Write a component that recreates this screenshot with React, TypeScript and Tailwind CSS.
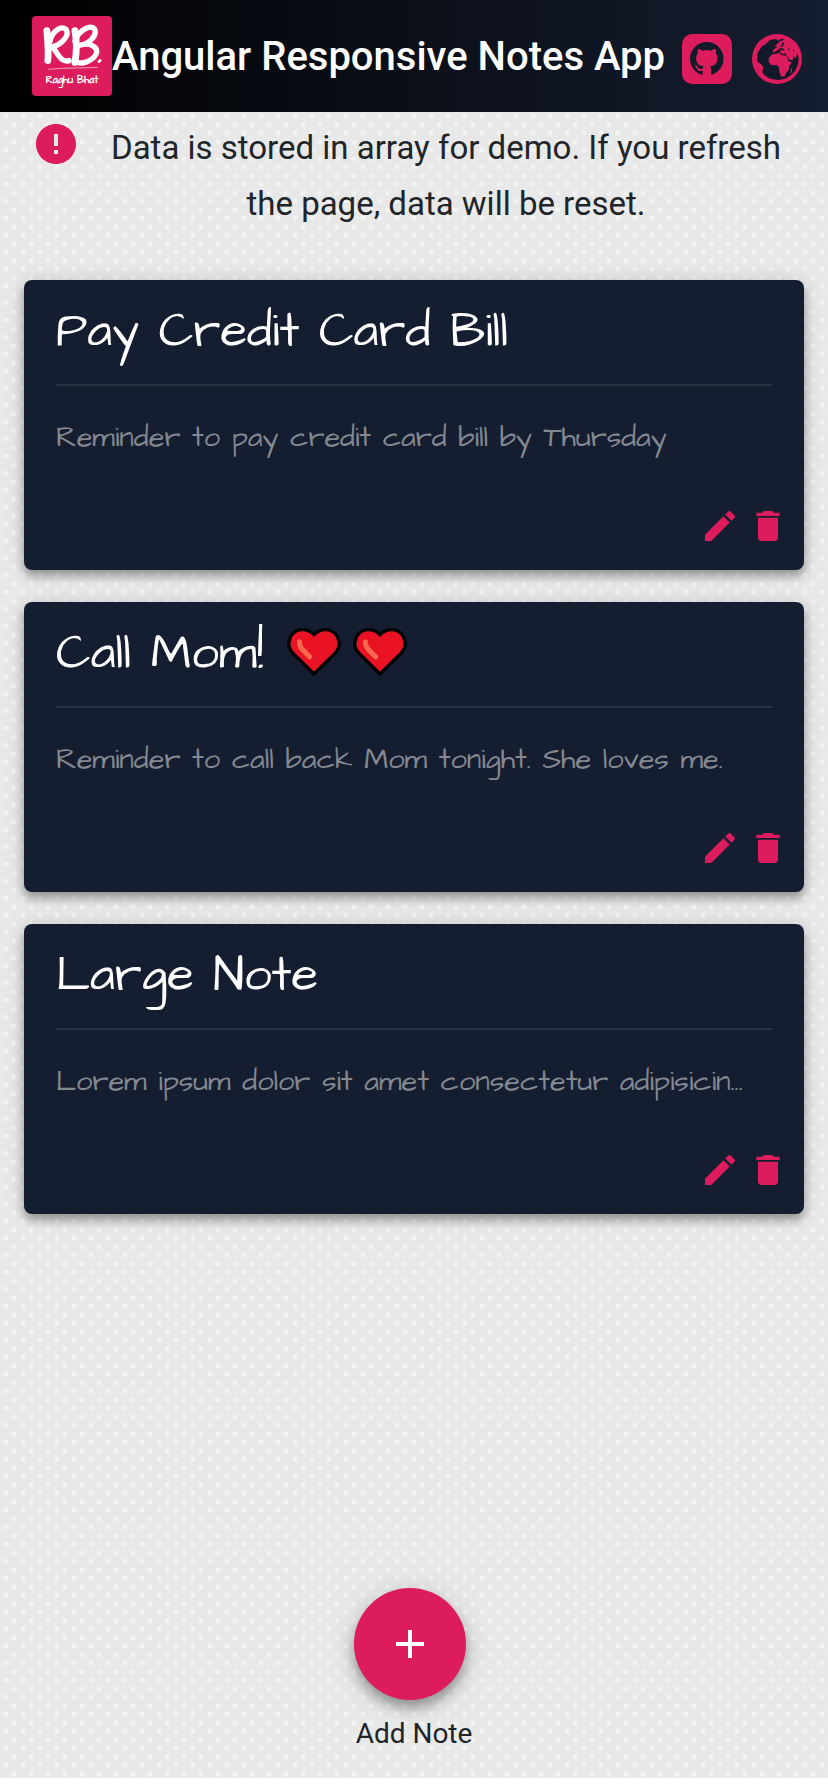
import { MdDelete, MdEdit, MdError, MdAdd } from 'react-icons/md';

type Note = { title: string; hearts?: number; body: string };

const notes: Note[] = [
  { title: 'Pay Credit Card Bill', body: 'Reminder to pay credit card bill by Thursday' },
  { title: 'Call Mom!', hearts: 2, body: 'Reminder to call back Mom tonight. She loves me.' },
  { title: 'Large Note', body: 'Lorem ipsum dolor sit amet consectetur adipisicin...' },
];

function Logo() {
  return (
    <a
      href="#"
      aria-label="Raghu Bhat"
      className="flex size-20 shrink-0 flex-col items-center rounded-sm bg-[#dc1c5c] pt-2 text-white"
    >
      <svg viewBox="0 0 62 48" className="h-12 w-15" fill="none" stroke="currentColor" strokeLinecap="round" strokeLinejoin="round" aria-hidden="true">
        <path strokeWidth="7" d="M5 6C6 18 7 28 6 37" />
        <path strokeWidth="5.500" d="M8 18C10 6 21 0 25 5C29 12 19 21 10 23C15 25 18 40 28 37" />
        <path strokeWidth="7" d="M34 6C36 17 36 28 34 39" />
        <path strokeWidth="5.500" d="M34 17C38 5 50 0 54 4C58 11 48 20 40 21C49 18 59 23 56 30C53 37 41 42 34 38" />
        <path strokeWidth="3" d="M59 38L60 37" />
        <path strokeWidth="1" opacity=".6" d="M7 46C25 44 42 45 57 44" />
      </svg>
      <span className="font-['Architects_Daughter','Lato',cursive] text-[10px] leading-4 font-bold">Raghu Bhat</span>
    </a>
  );
}

function GithubIcon() {
  return (
    <svg viewBox="0 0 50 50" className="size-[50px]" aria-hidden="true">
      <rect width="50" height="50" rx="10" fill="#dc1c5c" />
      <path
        transform="translate(8 8) scale(2.1)"
        fill="#121a2a"
        d="M8 0C3.58 0 0 3.58 0 8c0 3.54 2.29 6.53 5.47 7.59.4.07.55-.17.55-.38 0-.19-.01-.82-.01-1.49-2.01.37-2.53-.49-2.69-.94-.09-.23-.48-.94-.82-1.13-.28-.15-.68-.52-.01-.53.63-.01 1.08.58 1.23.82.72 1.21 1.87.87 2.33.66.07-.52.28-.87.51-1.07-1.78-.2-3.64-.89-3.64-3.95 0-.87.31-1.59.82-2.15-.08-.2-.36-1.02.08-2.12 0 0 .67-.21 2.2.82.64-.18 1.32-.27 2-.27s1.36.09 2 .27c1.53-1.04 2.2-.82 2.2-.82.44 1.1.16 1.92.08 2.12.51.56.82 1.27.82 2.15 0 3.07-1.87 3.75-3.65 3.95.29.25.54.73.54 1.48 0 1.07-.01 1.93-.01 2.2 0 .21.15.46.55.38A8.01 8.01 0 0 0 16 8c0-4.42-3.58-8-8-8z"
      />
    </svg>
  );
}

function GlobeIcon() {
  return (
    <svg viewBox="0 0 150 150" className="size-[50px]" aria-hidden="true">
      <circle cx="75" cy="75" r="75" fill="#dc1c5c" />
      <path
        fill="#121a2a"
        d="M72 15L58 17L47 22L50 26L40 27L42 31L31 35L24 46L17 56L15 70L17 84L27 90L34 100L31 112L34 120L48 131L62 136L80 138L100 134L118 123L131 108L138 90L140 72L136 58L131 74L126 66L121 79L113 78L106 68L100 58L92 60L82 54L88 48L98 50L92 42L82 44L74 50L64 56L62 48L70 44L76 38L68 36L76 30L84 22L92 20L96 14L84 16L80 20Z"
      />
      <path
        fill="#dc1c5c"
        d="M66 60L82 57L88 63L104 65L109 81L119 85L111 98L110 108L102 117L97 128L87 127L82 112L80 97L73 93L58 94L50 84L51 71L59 62ZM70 42L78 44L72 52L64 51ZM80 34L86 26L82 37ZM117 108L120 100L120 113L115 119Z"
      />
      <path fill="#121a2a" d="M94 32L98 27L93 24L88 34L84 38L92 38ZM106 45L114 43L110 49ZM122 48L126 47L126 53Z" />
    </svg>
  );
}

function Heart() {
  return (
    <svg viewBox="0 0 162 148" className="h-[49px] w-[54px]" role="img" aria-label="heart">
      <path
        d="M81 139L17 76C-4 54 4 15 36 6C55 2 70 9 81 20C92 9 107 2 126 6C158 15 166 54 145 76Z"
        fill="#ea1323"
        stroke="#000"
        strokeWidth="10"
      />
      <path d="M37 42C36 56 42 62 68 87" fill="none" stroke="#f4694f" strokeWidth="15" strokeLinecap="round" strokeLinejoin="round" />
    </svg>
  );
}

function NoteCard({ note }: { note: Note }) {
  return (
    <li className="rounded-lg bg-[#151e30] shadow-[0_6px_10px_rgba(0,0,0,0.3),0_2px_20px_rgba(0,0,0,0.14)]">
      <article className="font-['Architects_Daughter','Lato',cursive]">
        <div className="mx-8 flex h-[106px] items-center gap-6 border-b-2 border-[#2b3342]">
          <h2 className="text-[49px] leading-[60px] text-white">{note.title}</h2>
          {note.hearts && (
            <span className="flex gap-3 pb-1">
              {Array.from({ length: note.hearts }, (_, i) => (
                <Heart key={i} />
              ))}
            </span>
          )}
        </div>
        <p className="mx-8 mt-8 truncate text-[29px] leading-10 text-[#848891]">{note.body}</p>
        <div className="mt-12 flex justify-end gap-2 px-4 pb-6 text-[#dc1c5c]">
          <button type="button" aria-label="Edit note">
            <MdEdit className="size-10" />
          </button>
          <button type="button" aria-label="Delete note">
            <MdDelete className="size-10" />
          </button>
        </div>
      </article>
    </li>
  );
}

export default function App() {
  return (
    <div className="min-h-screen bg-white pb-[14px] font-['Roboto',sans-serif]">
      <div className="flex min-h-[calc(100vh-14px)] flex-col bg-[#e8e8e8] bg-[radial-gradient(circle_at_14px_6px,#f0f2f3_2px,transparent_3px),radial-gradient(circle_at_6px_14px,#f0f2f3_2px,transparent_3px)] bg-[length:17px_17px]">
        <header className="flex h-28 items-center bg-linear-to-r/srgb from-black to-[#151e30] pr-[26px] pl-8">
          <Logo />
          <h1 className="pt-0.5 text-[40px] font-medium whitespace-nowrap text-white">Angular Responsive Notes App</h1>
          <nav className="ml-auto flex gap-5 pt-1.5">
            <a href="#" aria-label="GitHub">
              <GithubIcon />
            </a>
            <a href="#" aria-label="Website">
              <GlobeIcon />
            </a>
          </nav>
        </header>
        <main className="flex flex-1 flex-col">
          <div className="flex items-start pt-2 pr-10 pl-8">
            <MdError className="size-12 shrink-0 text-[#dc1c5c]" />
            <p className="flex-1 pl-6 text-center text-[33px] leading-14 text-[#212529]">
              Data is stored in array for demo. If you refresh the page, data will be reset.
            </p>
          </div>
          <ul className="mt-12 flex flex-col gap-8 px-6">
            {notes.map((note) => (
              <NoteCard key={note.title} note={note} />
            ))}
          </ul>
          <div className="mt-auto flex flex-col items-center pb-5.5">
            <button
              type="button"
              aria-label="Add Note"
              className="mr-2 flex size-28 items-center justify-center rounded-full bg-[#dc1c5c] text-white shadow-[0_8px_12px_rgba(0,0,0,0.3),0_4px_30px_rgba(0,0,0,0.14)]"
            >
              <MdAdd className="size-12" />
            </button>
            <p className="mt-3 text-[28px] leading-11 text-[#212529]">Add Note</p>
          </div>
        </main>
      </div>
    </div>
  );
}
